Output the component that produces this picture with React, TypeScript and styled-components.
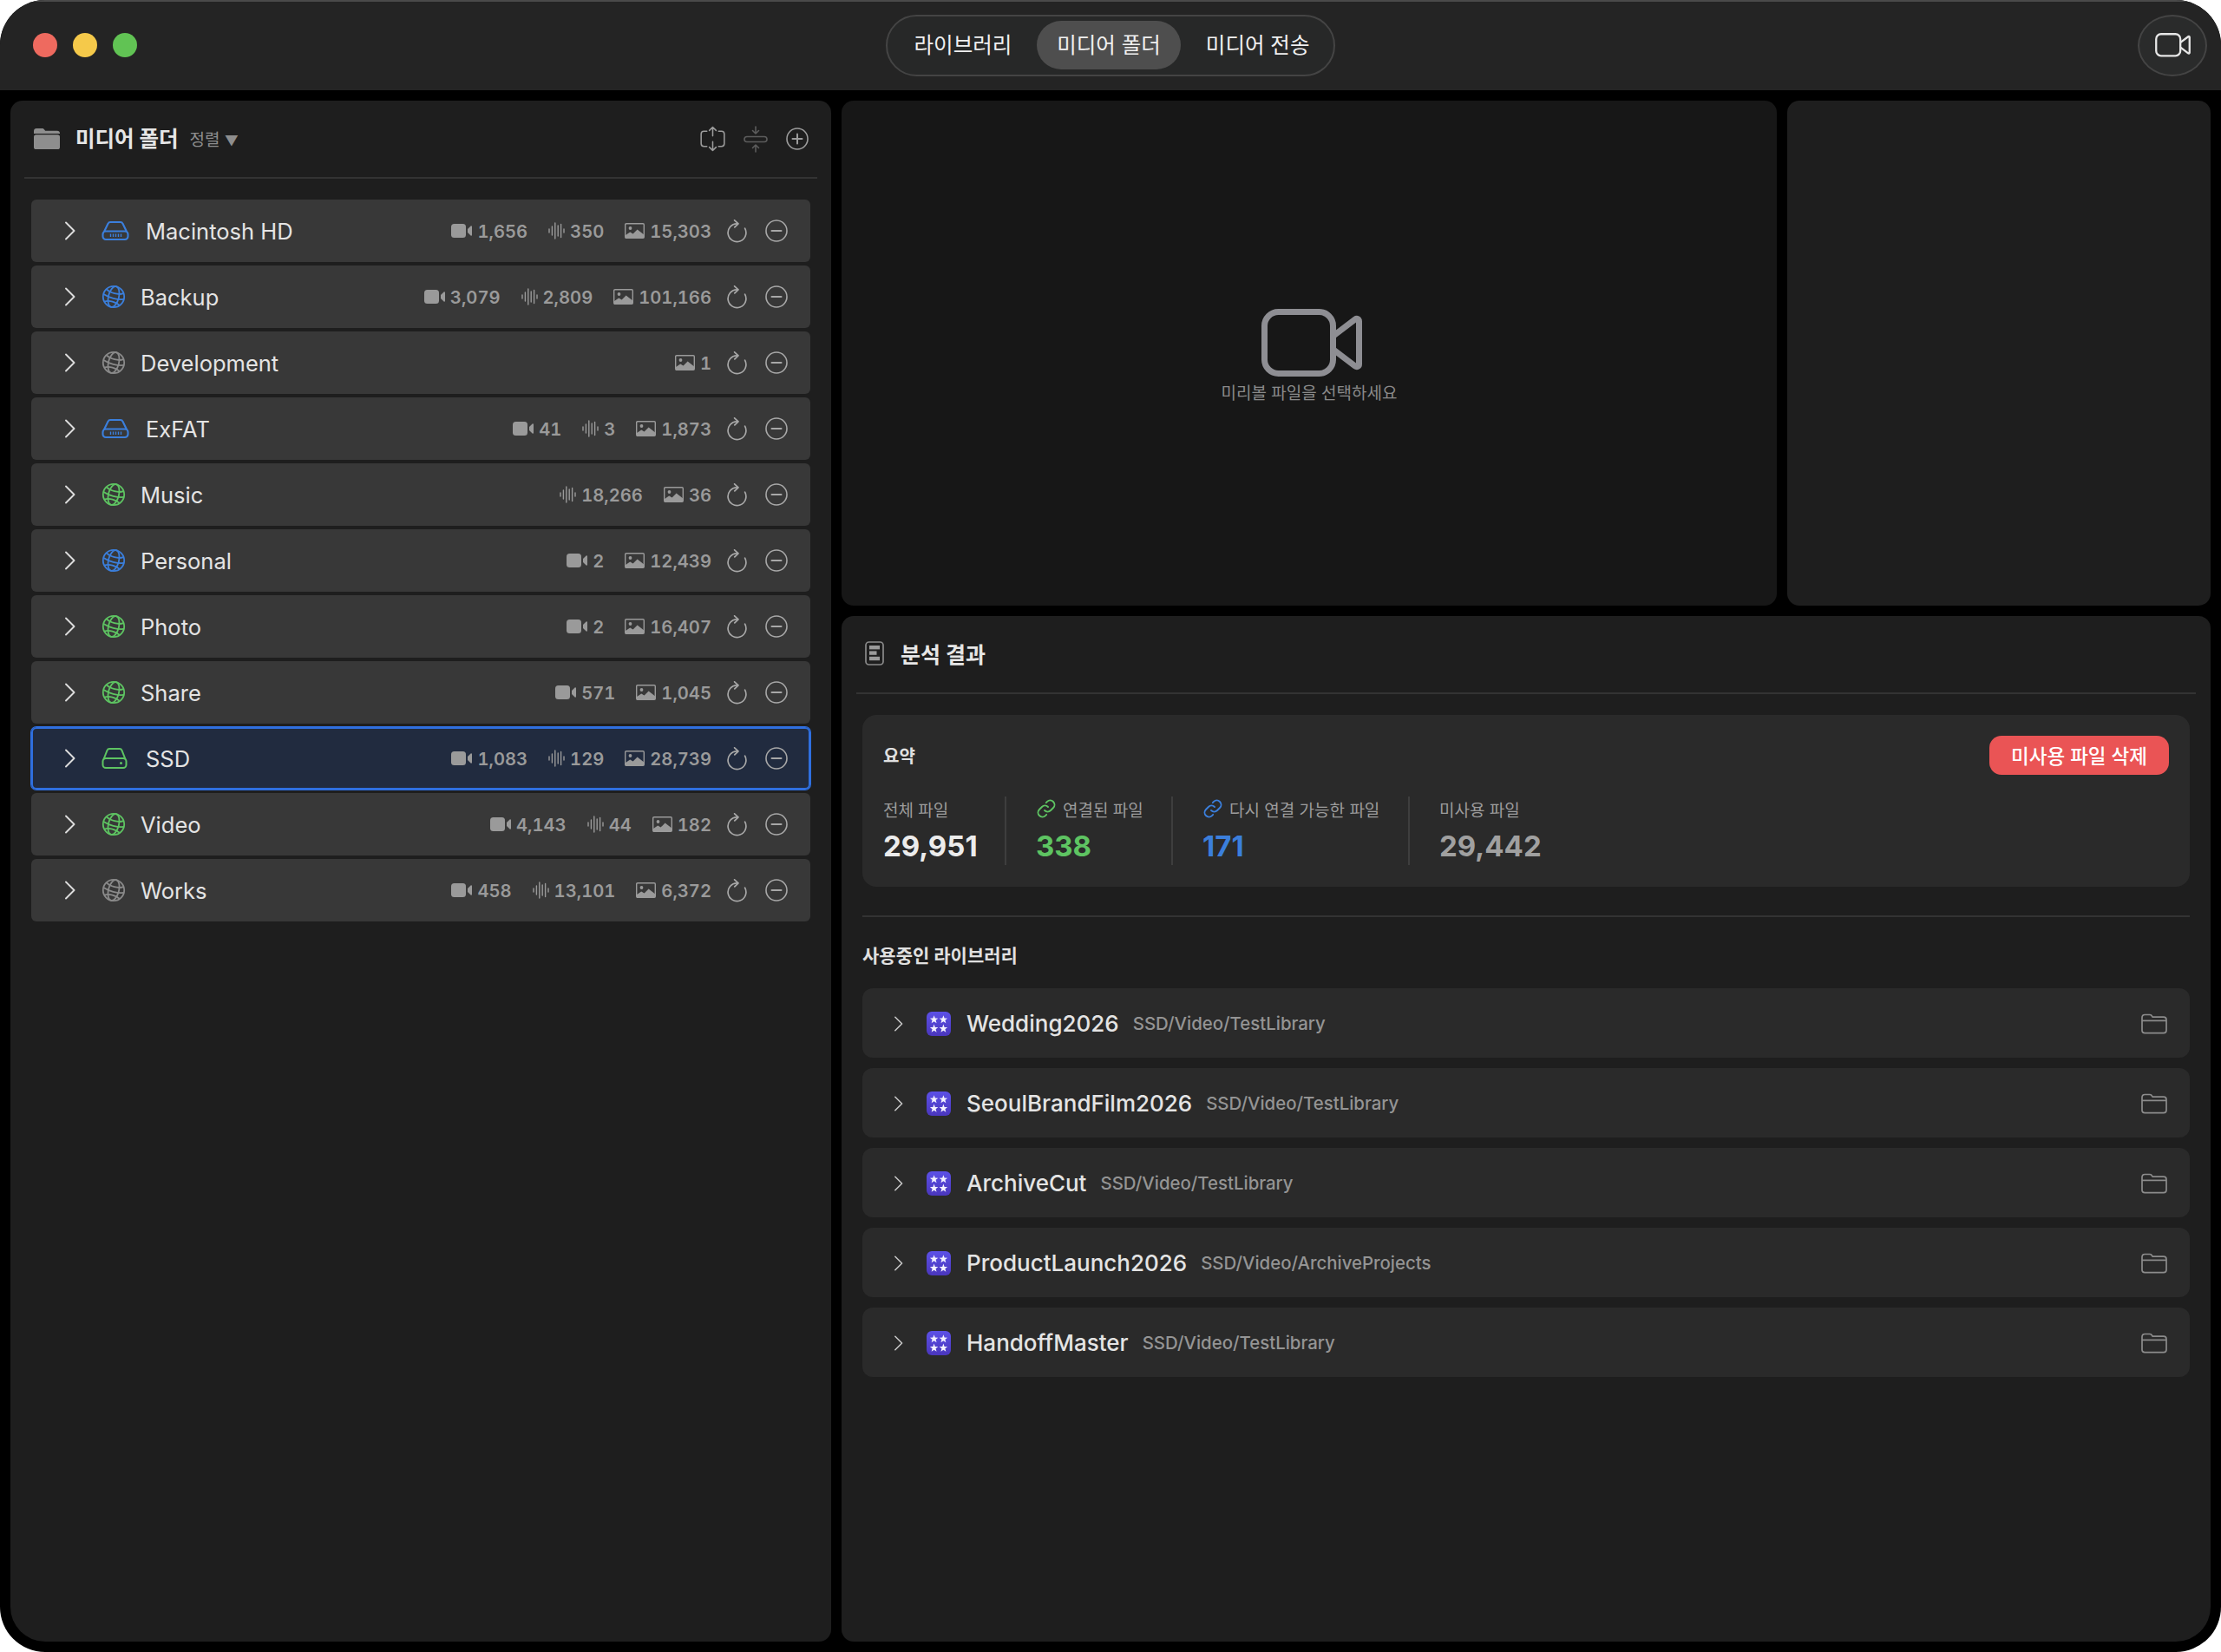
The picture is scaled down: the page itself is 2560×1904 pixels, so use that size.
import React from "react";
import styled, { createGlobalStyle } from "styled-components";

const GlobalStyle = createGlobalStyle`
  html, body {
    margin: 0;
    padding: 0;
    background: #fff;
    font-family: Inter, "Noto Sans CJK KR", sans-serif;
  }
  * { box-sizing: border-box; }
`;

type DriveKind = "hd" | "ssd" | "net";

type Volume = {
  name: string;
  kind: DriveKind;
  color: string;
  video?: string;
  audio?: string;
  image?: string;
  selected?: boolean;
};

const BLUE = "#3b7fdc";
const GREEN = "#5ec462";
const GRAY = "#8a8a8a";

const volumes: Volume[] = [
  { name: "Macintosh HD", kind: "hd", color: BLUE, video: "1,656", audio: "350", image: "15,303" },
  { name: "Backup", kind: "net", color: BLUE, video: "3,079", audio: "2,809", image: "101,166" },
  { name: "Development", kind: "net", color: GRAY, image: "1" },
  { name: "ExFAT", kind: "hd", color: BLUE, video: "41", audio: "3", image: "1,873" },
  { name: "Music", kind: "net", color: GREEN, audio: "18,266", image: "36" },
  { name: "Personal", kind: "net", color: BLUE, video: "2", image: "12,439" },
  { name: "Photo", kind: "net", color: GREEN, video: "2", image: "16,407" },
  { name: "Share", kind: "net", color: GREEN, video: "571", image: "1,045" },
  { name: "SSD", kind: "ssd", color: GREEN, video: "1,083", audio: "129", image: "28,739", selected: true },
  { name: "Video", kind: "net", color: GREEN, video: "4,143", audio: "44", image: "182" },
  { name: "Works", kind: "net", color: GRAY, video: "458", audio: "13,101", image: "6,372" },
];

const libraries = [
  { name: "Wedding2026", path: "SSD/Video/TestLibrary" },
  { name: "SeoulBrandFilm2026", path: "SSD/Video/TestLibrary" },
  { name: "ArchiveCut", path: "SSD/Video/TestLibrary" },
  { name: "ProductLaunch2026", path: "SSD/Video/ArchiveProjects" },
  { name: "HandoffMaster", path: "SSD/Video/TestLibrary" },
];

const starPoints = (cx: number, cy: number, r: number) =>
  Array.from({ length: 10 }, (_, i) => {
    const radius = i % 2 === 0 ? r : r * 0.42;
    const angle = -Math.PI / 2 + (i * Math.PI) / 5;
    return `${(cx + radius * Math.cos(angle)).toFixed(2)},${(cy + radius * Math.sin(angle)).toFixed(2)}`;
  }).join(" ");

const Chevron = ({ size = 22 }: { size?: number }) => (
  <svg width={size / 2 + 2} height={size} viewBox="0 0 13 22" fill="none" stroke="currentColor" strokeWidth="1.9" strokeLinecap="round" strokeLinejoin="round">
    <path d="M2 1.5 L11.5 11 L2 20.5" />
  </svg>
);

const Globe = ({ color }: { color: string }) => (
  <svg width="28" height="28" viewBox="0 0 28 28" fill="none" stroke={color} strokeWidth="1.8">
    <circle cx="14" cy="14" r="12.2" />
    <g transform="rotate(14 14 14)">
      <ellipse cx="14" cy="14" rx="6" ry="12.2" />
      <path d="M3.8 7.5 C9 11 19 11 24.2 7.5" />
      <path d="M2 14 C9 16.5 19 16.5 26 14" />
      <path d="M5 22 C10 19 18 19 23 22" />
    </g>
  </svg>
);

const HardDrive = ({ color }: { color: string }) => (
  <svg width="32" height="24" viewBox="0 0 32 24" fill="none" stroke={color} strokeWidth="2.1" strokeLinejoin="round">
    <path d="M3 13 L7.5 3.8 C8 2.6 9 2 10.2 2 H21.8 C23 2 24 2.6 24.5 3.8 L29 13" />
    <rect x="1.5" y="12.5" width="29" height="9.5" rx="3.5" />
    <path d="M10.5 15.5 V19 M13.5 15.5 V19 M16.5 15.5 V19 M19.5 15.5 V19 M22.5 15.5 V19" strokeWidth="1.4" />
  </svg>
);

const SsdDrive = ({ color }: { color: string }) => (
  <svg width="30" height="26" viewBox="0 0 30 26" fill="none" stroke={color} strokeWidth="2" strokeLinejoin="round">
    <path d="M2.5 14 L6.5 3.8 C7 2.6 8 2 9.2 2 H20.8 C22 2 23 2.6 23.5 3.8 L27.5 14" />
    <rect x="1.5" y="13" width="27" height="11" rx="3.5" />
    <circle cx="22.5" cy="18.5" r="1.5" fill={color} stroke="none" />
  </svg>
);

const VideoGlyph = () => (
  <svg width="24" height="16" viewBox="0 0 24 16" fill="currentColor">
    <rect x="0" y="0" width="17" height="16" rx="3.5" />
    <path d="M19 6 L22.6 2.6 C23.2 2 24 2.4 24 3.2 V12.8 C24 13.6 23.2 14 22.6 13.4 L19 10 Z" />
  </svg>
);

const WaveGlyph = () => (
  <svg width="19" height="20" viewBox="0 0 19 20" fill="none" stroke="currentColor" strokeWidth="1.4" strokeLinecap="round">
    <path d="M1 8 V12 M4.4 5 V15 M7.8 1 V19 M11.2 4 V16 M14.6 2.5 V17.5 M18 8 V12" />
  </svg>
);

const ImageGlyph = () => (
  <svg width="23" height="18" viewBox="0 0 23 18" fill="none">
    <rect x="0.7" y="0.7" width="21.6" height="16.6" rx="1.2" stroke="currentColor" strokeWidth="1.4" />
    <circle cx="6.5" cy="6" r="1.9" fill="currentColor" />
    <path d="M0.7 17.3 V14.2 L6.2 10.4 L9.6 12.6 L14.6 7.4 L22.3 13.4 V17.3 Z" fill="currentColor" />
  </svg>
);

const ReloadGlyph = () => (
  <svg width="23" height="27" viewBox="0 0 23 27" fill="none" stroke="currentColor" strokeWidth="1.7" strokeLinecap="round" strokeLinejoin="round">
    <path d="M11.5 4.8 A10.4 10.4 0 1 0 20.6 10.2" />
    <path d="M8.6 0.8 L13 4.8 L8.8 8.8" />
  </svg>
);

const CircleGlyph = ({ plus }: { plus?: boolean }) => (
  <svg width="26" height="26" viewBox="0 0 26 26" fill="none" stroke="currentColor" strokeWidth="1.6" strokeLinecap="round">
    <circle cx="13" cy="13" r="12" />
    <path d="M7.5 13 H18.5" strokeWidth="2" />
    {plus && <path d="M13 7.5 V18.5" strokeWidth="2" />}
  </svg>
);

const ExpandGlyph = () => (
  <svg width="29" height="30" viewBox="0 0 30 31" fill="none" stroke="currentColor" strokeWidth="1.6" strokeLinecap="round" strokeLinejoin="round">
    <path d="M8 6.5 H4.5 C2.5 6.5 1.2 7.8 1.2 9.8 V21.2 C1.2 23.2 2.5 24.5 4.5 24.5 H8" />
    <path d="M22 6.5 H25.5 C27.5 6.5 28.8 7.8 28.8 9.8 V21.2 C28.8 23.2 27.5 24.5 25.5 24.5 H22" />
    <path d="M15 12 V1.5 M11 5.5 L15 1.5 L19 5.5" />
    <path d="M15 19 V29.5 M11 25.5 L15 29.5 L19 25.5" />
  </svg>
);

const CollapseGlyph = () => (
  <svg width="28" height="31" viewBox="0 0 28 31" fill="none" stroke="currentColor" strokeWidth="1.6" strokeLinecap="round" strokeLinejoin="round">
    <rect x="1" y="12.5" width="26" height="6" rx="3" />
    <path d="M14 1 V9 M10.5 5.5 L14 9 L17.5 5.5" />
    <path d="M14 30 V22 M10.5 25.5 L14 22 L17.5 25.5" />
  </svg>
);

const FolderFilled = () => (
  <svg width="30" height="24" viewBox="0 0 30 24" fill="#8e8e8e">
    <path d="M0 3 C0 1.3 1.2 0 3 0 H9.5 C10.6 0 11.4 0.5 12 1.2 L13.2 2.8 H27 C28.8 2.8 30 4 30 5.6 V6 H0 Z" />
    <rect x="0" y="7.2" width="30" height="16.8" rx="2.6" />
  </svg>
);

const FolderOutline = () => (
  <svg width="30" height="24" viewBox="0 0 30 24" fill="none" stroke="#8c8c8c" strokeWidth="1.7" strokeLinejoin="round">
    <path d="M1 5 C1 2.8 2.3 1.5 4.2 1.5 H9.8 C10.8 1.5 11.5 1.9 12 2.6 L13.2 4.2 H25.8 C27.7 4.2 29 5.5 29 7.4 V19.4 C29 21.3 27.7 22.6 25.8 22.6 H4.2 C2.3 22.6 1 21.3 1 19.4 Z" />
    <path d="M1 8.4 H29" />
  </svg>
);

const CameraOutline = ({ width, stroke }: { width: number; stroke: number }) => (
  <svg width={width} height={(width * 78) / 116} viewBox="0 0 116 78" fill="none" stroke="currentColor" strokeWidth={stroke} strokeLinejoin="round">
    <rect x="3.5" y="3.5" width="79" height="71" rx="16" />
    <path d="M83 31 L108 12 C110 10.5 112.5 11.5 112.5 14.5 V63.5 C112.5 66.5 110 67.5 108 66 L83 47" />
  </svg>
);

const ReportGlyph = () => (
  <svg width="22" height="28" viewBox="0 0 22 28" fill="none">
    <rect x="1" y="1" width="20" height="26" rx="3.5" stroke="#8a8a8a" strokeWidth="1.7" />
    <rect x="5" y="5" width="12" height="4.4" fill="#9a9a9a" />
    <rect x="5" y="11.4" width="8.5" height="4.4" fill="#9a9a9a" />
    <rect x="5" y="17.8" width="12" height="4.4" fill="#9a9a9a" />
  </svg>
);

const LinkGlyph = ({ color }: { color: string }) => (
  <svg width="24" height="24" viewBox="0 0 24 24" fill="none" stroke={color} strokeWidth="1.9" strokeLinecap="round" strokeLinejoin="round">
    <path d="M10 14a5 5 0 0 0 7.07 0l3-3a5 5 0 0 0-7.07-7.07l-1.2 1.2" />
    <path d="M14 10a5 5 0 0 0-7.07 0l-3 3a5 5 0 0 0 7.07 7.07l1.2-1.2" />
  </svg>
);

const LibraryGlyph = () => (
  <svg width="28" height="28" viewBox="0 0 28 28">
    <defs>
      <linearGradient id="libFill" x1="0" y1="0" x2="0" y2="1">
        <stop offset="0" stopColor="#5c50e6" />
        <stop offset="1" stopColor="#4a36bd" />
      </linearGradient>
    </defs>
    <rect width="28" height="28" rx="6" fill="url(#libFill)" />
    <polygon fill="#f4f2ff" points={starPoints(8.6, 9.2, 5)} />
    <polygon fill="#f4f2ff" points={starPoints(19.4, 9.2, 5)} />
    <polygon fill="#f4f2ff" points={starPoints(8.6, 19.6, 5)} />
    <polygon fill="#f4f2ff" points={starPoints(19.4, 19.6, 5)} />
  </svg>
);

export default function App() {
  return (
    <>
      <GlobalStyle />
      <Window>
        <TitleBar>
          <Lights>
            <Light $color="#ee6a5f" />
            <Light $color="#f5c94a" />
            <Light $color="#61c354" />
          </Lights>
          <Segments>
            <Segment>라이브러리</Segment>
            <Segment $active>미디어 폴더</Segment>
            <Segment>미디어 전송</Segment>
          </Segments>
          <CameraButton>
            <CameraOutline width={41} stroke={6.5} />
          </CameraButton>
        </TitleBar>

        <Main>
          <LeftPanel>
            <LeftHeader>
              <FolderFilled />
              <PanelTitle>미디어 폴더</PanelTitle>
              <SortLabel>정렬 <SortCaret>▼</SortCaret></SortLabel>
              <HeaderActions>
                <HeaderAction><ExpandGlyph /></HeaderAction>
                <HeaderAction $dim><CollapseGlyph /></HeaderAction>
                <HeaderAction><CircleGlyph plus /></HeaderAction>
              </HeaderActions>
            </LeftHeader>
            <VolumeList>
              {volumes.map(v => (
                <VolumeRow key={v.name} $selected={v.selected}>
                  <RowChevron><Chevron /></RowChevron>
                  <VolumeIcon $net={v.kind === "net"}>
                    {v.kind === "net" && <Globe color={v.color} />}
                    {v.kind === "hd" && <HardDrive color={v.color} />}
                    {v.kind === "ssd" && <SsdDrive color={v.color} />}
                  </VolumeIcon>
                  <VolumeName>{v.name}</VolumeName>
                  <Stats>
                    {v.video && <Stat><VideoGlyph />{v.video}</Stat>}
                    {v.audio && <Stat><WaveGlyph />{v.audio}</Stat>}
                    {v.image && <Stat><ImageGlyph />{v.image}</Stat>}
                  </Stats>
                  <RowActions>
                    <ReloadGlyph />
                    <CircleGlyph />
                  </RowActions>
                </VolumeRow>
              ))}
            </VolumeList>
          </LeftPanel>

          <RightColumn>
            <TopRow>
              <Preview>
                <PreviewIcon><CameraOutline width={116} stroke={7} /></PreviewIcon>
                <PreviewText>미리볼 파일을 선택하세요</PreviewText>
              </Preview>
              <SidePanel />
            </TopRow>

            <AnalysisPanel>
              <AnalysisHeader>
                <ReportGlyph />
                <AnalysisTitle>분석 결과</AnalysisTitle>
              </AnalysisHeader>
              <AnalysisBody>
                <SummaryCard>
                  <SummaryTop>
                    <SummaryTitle>요약</SummaryTitle>
                    <DeleteButton>미사용 파일 삭제</DeleteButton>
                  </SummaryTop>
                  <StatGrid>
                    <SummaryStat $width={142}>
                      <StatLabel>전체 파일</StatLabel>
                      <StatValue $color="#ececec">29,951</StatValue>
                    </SummaryStat>
                    <SummaryStat $width={158}>
                      <StatLabel><LinkGlyph color={GREEN} />연결된 파일</StatLabel>
                      <StatValue $color={GREEN}>338</StatValue>
                    </SummaryStat>
                    <SummaryStat $width={239}>
                      <StatLabel><LinkGlyph color={BLUE} />다시 연결 가능한 파일</StatLabel>
                      <StatValue $color={BLUE}>171</StatValue>
                    </SummaryStat>
                    <SummaryStat>
                      <StatLabel>미사용 파일</StatLabel>
                      <StatValue $color="#a0a0a0">29,442</StatValue>
                    </SummaryStat>
                  </StatGrid>
                </SummaryCard>
                <SectionRule />
                <SectionTitle>사용중인 라이브러리</SectionTitle>
                <LibraryList>
                  {libraries.map(l => (
                    <LibraryRow key={l.name}>
                      <LibraryChevron><Chevron size={18} /></LibraryChevron>
                      <LibraryGlyph />
                      <LibraryName>{l.name}</LibraryName>
                      <LibraryPath>{l.path}</LibraryPath>
                      <LibraryFolder><FolderOutline /></LibraryFolder>
                    </LibraryRow>
                  ))}
                </LibraryList>
              </AnalysisBody>
            </AnalysisPanel>
          </RightColumn>
        </Main>
      </Window>
    </>
  );
}

const Window = styled.div`
  width: 2560px;
  height: 1904px;
  background: #000;
  border-radius: 52px;
  overflow: hidden;
  display: flex;
  flex-direction: column;
`;

const TitleBar = styled.header`
  height: 104px;
  background: #242424;
  border-top: 2px solid #4a4a4a;
  display: grid;
  grid-template-columns: 1fr auto 1fr;
  align-items: center;
  padding: 0 16px 2px 16px;
`;

const Lights = styled.div`
  display: flex;
  gap: 18px;
  margin-left: 22px;
`;

const Light = styled.span<{ $color: string }>`
  width: 28px;
  height: 28px;
  border-radius: 50%;
  background: ${p => p.$color};
`;

const Segments = styled.nav`
  display: flex;
  align-items: center;
  gap: 6px;
  height: 71px;
  padding: 0 5px 0 8px;
  border: 2px solid #444;
  border-radius: 36px;
  background: #272828;
`;

const Segment = styled.span<{ $active?: boolean }>`
  display: flex;
  align-items: center;
  justify-content: center;
  height: 56px;
  padding: 0 23px 3px;
  border-radius: 28px;
  font-size: 24.5px;
  color: #f0f0f0;
  background: ${p => (p.$active ? "#4e4e4e" : "transparent")};
`;

const CameraButton = styled.div`
  justify-self: end;
  width: 80px;
  height: 71px;
  border-radius: 50%;
  border: 2px solid #444;
  background: #2a2b2b;
  color: #e6e6e6;
  display: flex;
  align-items: center;
  justify-content: center;
`;

const Main = styled.main`
  flex: 1;
  min-height: 0;
  padding: 12px;
  display: grid;
  grid-template-columns: 946px 1fr;
  gap: 12px;
`;

const LeftPanel = styled.section`
  background: #1e1e1e;
  border-radius: 14px 14px 14px 40px;
  padding: 0 16px;
  display: flex;
  flex-direction: column;
`;

const LeftHeader = styled.div`
  height: 90px;
  margin-bottom: 24px;
  padding: 0 10px 0 11px;
  border-bottom: 2px solid #333;
  display: flex;
  align-items: center;
  color: #9a9a9a;
`;

const PanelTitle = styled.h1`
  margin: 0 0 3px 18px;
  font-size: 24.5px;
  font-weight: 700;
  color: #e6e6e6;
`;

const SortLabel = styled.span`
  margin: 0 0 2px 13px;
  font-size: 19px;
  color: #8e8e8e;
`;

const SortCaret = styled.span`
  font-size: 16px;
`;

const HeaderActions = styled.div`
  margin-left: auto;
  display: flex;
  align-items: center;
  gap: 21px;
`;

const HeaderAction = styled.span<{ $dim?: boolean }>`
  display: flex;
  color: ${p => (p.$dim ? "#5c5c5c" : "#9c9c9c")};
`;

const VolumeList = styled.div`
  padding: 0 8px;
  display: flex;
  flex-direction: column;
  gap: 4px;
`;

const VolumeRow = styled.div<{ $selected?: boolean }>`
  height: 72px;
  padding: 0 26px 0 38px;
  border-radius: 6px;
  background: ${p => (p.$selected ? "#212b3f" : "#383838")};
  box-shadow: ${p => (p.$selected ? "inset 0 0 0 2px #2f6fdf, 0 0 0 1px #2f6fdf" : "none")};
  display: flex;
  align-items: center;
`;

const RowChevron = styled.span`
  display: flex;
  color: #dcdcdc;
  width: 43px;
`;

const VolumeIcon = styled.span<{ $net: boolean }>`
  display: flex;
  width: ${p => (p.$net ? "45px" : "51px")};
`;

const VolumeName = styled.span`
  font-size: 25.5px;
  color: #e4e4e4;
`;

const Stats = styled.div`
  margin-left: auto;
  display: flex;
  align-items: center;
  gap: 24px;
`;

const Stat = styled.span`
  display: flex;
  align-items: center;
  gap: 6px;
  font-size: 20.2px;
  font-weight: 600;
  font-variant-numeric: tabular-nums;
  color: #9a9a9a;
`;

const RowActions = styled.div`
  margin-left: 18px;
  display: flex;
  align-items: center;
  gap: 21px;
  color: #a8a8a8;
`;

const RightColumn = styled.div`
  display: grid;
  grid-template-rows: 582px 1fr;
  gap: 12px;
  min-height: 0;
`;

const TopRow = styled.div`
  display: grid;
  grid-template-columns: 1078px 1fr;
  gap: 12px;
`;

const Preview = styled.section`
  background: #171717;
  border-radius: 14px;
  padding-top: 240px;
  display: flex;
  flex-direction: column;
  align-items: center;
`;

const PreviewIcon = styled.div`
  display: flex;
  color: #8e8e93;
  margin-left: 5px;
`;

const PreviewText = styled.p`
  margin: 4px 0 0;
  font-size: 19px;
  color: #8a8a8a;
`;

const SidePanel = styled.section`
  background: #1e1e1e;
  border-radius: 14px;
`;

const AnalysisPanel = styled.section`
  background: #1e1e1e;
  border-radius: 14px 14px 40px 14px;
  padding: 0 17px;
`;

const AnalysisHeader = styled.div`
  height: 90px;
  padding: 0 0 2px 10px;
  border-bottom: 2px solid #333;
  display: flex;
  align-items: center;
  gap: 19px;
`;

const AnalysisTitle = styled.h2`
  margin: 0;
  font-size: 25px;
  font-weight: 700;
  color: #e6e6e6;
`;

const AnalysisBody = styled.div`
  padding: 24px 7px 0;
`;

const SummaryCard = styled.div`
  height: 198px;
  padding: 24px 24px 0;
  border-radius: 16px;
  background: #2a2a2a;
`;

const SummaryTop = styled.div`
  display: flex;
  justify-content: space-between;
  align-items: center;
`;

const SummaryTitle = styled.h3`
  margin: 0;
  font-size: 20px;
  font-weight: 700;
  color: #e0e0e0;
`;

const DeleteButton = styled.button`
  width: 207px;
  height: 45px;
  padding: 0 0 2px;
  border: 0;
  border-radius: 14px;
  background: #ea5455;
  color: #fff;
  font-family: inherit;
  font-size: 22.5px;
  font-weight: 500;
`;

const StatGrid = styled.div`
  display: flex;
  margin-top: 25px;
`;

const SummaryStat = styled.div<{ $width?: number }>`
  width: ${p => (p.$width ? `${p.$width}px` : "auto")};
  height: 79px;
  margin-right: 34px;
  border-right: ${p => (p.$width ? "2px solid #3e3e3e" : "0")};
`;

const StatLabel = styled.div`
  height: 28px;
  display: flex;
  align-items: center;
  gap: 7px;
  font-size: 19px;
  color: #9c9c9c;
`;

const StatValue = styled.div<{ $color: string }>`
  margin-top: 8px;
  font-size: 33px;
  font-weight: 700;
  line-height: 42px;
  color: ${p => p.$color};
`;

const SectionRule = styled.hr`
  margin: 33px 0 0;
  border: 0;
  border-top: 2px solid #333;
`;

const SectionTitle = styled.h3`
  margin: 31px 0 23px;
  font-size: 21px;
  line-height: 28px;
  font-weight: 700;
  color: #e0e0e0;
`;

const LibraryList = styled.div`
  display: flex;
  flex-direction: column;
  gap: 12px;
`;

const LibraryRow = styled.div`
  height: 80px;
  padding: 1px 26px 0 36px;
  border-radius: 12px;
  background: #2a2a2a;
  display: flex;
  align-items: center;
`;

const LibraryChevron = styled.span`
  display: flex;
  width: 38px;
  color: #c8c8c8;
`;

const LibraryName = styled.span`
  margin-left: 18px;
  font-size: 26px;
  font-weight: 500;
  color: #e4e4e4;
`;

const LibraryPath = styled.span`
  margin-left: 16px;
  font-size: 20.4px;
  font-weight: 500;
  color: #949494;
`;

const LibraryFolder = styled.span`
  display: flex;
  margin-left: auto;
`;
